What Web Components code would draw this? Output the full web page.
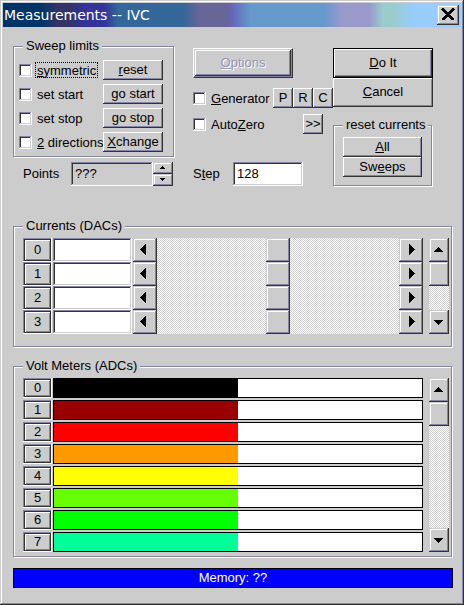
<!DOCTYPE html>
<html lang="en">
<head>
<meta charset="utf-8">
<title>Measurements -- IVC</title>
<style>
  html, body { height: 100%; }
  body {
    margin: 0;
    font: 13px/14px "Liberation Sans", Arial, sans-serif;
    color: #000;
    --face: #ccc;
    --light: #fff;
    --shade: #8484a4;
    --dark: #333;
  }
  .top {
    display: grid;
    grid-template-columns: 162px 140px 100px;
    grid-template-rows: 118px 24px;
    column-gap: 18px;
    row-gap: 5px;
    margin-bottom: 33px;
  }
  .top > .side { grid-column: 3; grid-row: 1 / 3; margin-left: -18px; width: 100px; }
  .side, .middle { display: flex; flex-direction: column; padding-top: 9px; }
  .side group-box { margin-top: 11px; --pad: 5px 9px 8px; }
  .big { --height: 30px; }
  .middle .big { width: 100px; margin-bottom: 10px; }
  .row { display: flex; align-items: center; height: 20px; margin-bottom: 6px; }
  .row .end { margin-left: auto; }
  .row push-button { width: 20px; flex: none; }
  .row .more { margin-right: 10px; }
  .limits { --pad: 7px 11px 4px 5px; }
  .pairs { display: grid; grid-template-columns: 84px 60px; row-gap: 4px; }
  .channels { display: flex; gap: 6px; }
  .list { flex: 1; min-width: 0; display: flex; flex-direction: column; }
  .meters .list { gap: 2px; }
  .currents { --pad: 5px 2px 12px 9px; margin-bottom: 12px; }
  .meters { --pad: 5px 2px 4px 9px; margin-bottom: 11px; }
</style>
</head>
<body>
<dialog-window>
  <span slot="title">Measurements -- IVC</span>

  <div class="top">
    <group-box class="limits">
      <span slot="legend">Sweep limits</span>
      <div class="pairs">
        <check-option focused><u>s</u>ymmetric</check-option>
        <push-button><u>r</u>eset</push-button>
        <check-option>set start</check-option>
        <push-button>go start</push-button>
        <check-option>set stop</check-option>
        <push-button>go stop</push-button>
        <check-option><u>2</u> directions</check-option>
        <push-button><u>X</u>change</push-button>
      </div>
    </group-box>

    <div class="middle">
      <push-button class="big" kind="framed" disabled><u>O</u>ptions</push-button>
      <div class="row">
        <check-option><u>G</u>enerator</check-option>
        <push-button class="end">P</push-button>
        <push-button>R</push-button>
        <push-button>C</push-button>
      </div>
      <div class="row">
        <check-option>Auto<u>Z</u>ero</check-option>
        <push-button class="end more">&gt;&gt;</push-button>
      </div>
    </div>

    <div class="side">
      <push-button class="big" kind="default"><u>D</u>o It</push-button>
      <push-button class="big"><u>C</u>ancel</push-button>
      <group-box>
        <span slot="legend">reset currents</span>
        <push-button><u>A</u>ll</push-button>
        <push-button>Sw<u>e</u>eps</push-button>
      </group-box>
    </div>

    <number-field value="???" spinner readonly style="--indent: 10px; --label: 48px; --field: 82px">Points</number-field>
    <number-field value="128" style="--label: 40px; --field: 70px">S<u>t</u>ep</number-field>
  </div>

  <group-box class="currents">
    <span slot="legend">Currents (DACs)</span>
    <div class="channels">
      <div class="list">
        <current-row channel="0"></current-row>
        <current-row channel="1"></current-row>
        <current-row channel="2"></current-row>
        <current-row channel="3"></current-row>
      </div>
      <scroll-bar vertical value="0" label="Scroll currents"></scroll-bar>
    </div>
  </group-box>

  <group-box class="meters">
    <span slot="legend">Volt Meters (ADCs)</span>
    <div class="channels">
      <div class="list">
        <meter-row channel="0" color="#000000"></meter-row>
        <meter-row channel="1" color="#990000"></meter-row>
        <meter-row channel="2" color="#ff0000"></meter-row>
        <meter-row channel="3" color="#ff9900"></meter-row>
        <meter-row channel="4" color="#ffff00"></meter-row>
        <meter-row channel="5" color="#66ff00"></meter-row>
        <meter-row channel="6" color="#00ff00"></meter-row>
        <meter-row channel="7" color="#00ff99"></meter-row>
      </div>
      <scroll-bar vertical value="0" label="Scroll volt meters"></scroll-bar>
    </div>
  </group-box>

  <status-bar>Memory: ??</status-bar>
</dialog-window>

<script>
const base = `
  * { box-sizing: border-box; }
  :host { display: block; box-sizing: border-box; }
  button, input { font: inherit; color: inherit; margin: 0; padding: 0; border: 0; border-radius: 0; outline: 0; }
  svg { display: block; shape-rendering: crispEdges; }
  .raised {
    background: var(--face);
    box-shadow: inset -1px -1px var(--dark), inset 1px 1px var(--face), inset -2px -2px var(--shade), inset 2px 2px var(--light);
  }
  .sunken {
    background: #fff;
    box-shadow: inset -1px -1px var(--light), inset 1px 1px var(--shade), inset -2px -2px var(--face), inset 2px 2px var(--dark);
  }
`

const arrows = {
  left: '<svg width="24" height="24"><path d="M13 6v11h-1v-1h-1v-1h-1v-1h-1v-1h-1v-1h-1v-1h1v-1h1v-1h1v-1h1v-1h1v-1z"/></svg>',
  right: '<svg width="24" height="24"><path d="M10 6v11h1v-1h1v-1h1v-1h1v-1h1v-1h1v-1h-1v-1h-1v-1h-1v-1h-1v-1h-1v-1z"/></svg>',
  up: '<svg width="20" height="24"><path d="M9 9h1v1h1v1h1v1h1v1h1v1h-9v-1h1v-1h1v-1h1v-1h1z"/></svg>',
  down: '<svg width="20" height="24"><path d="M5 10h9v1h-1v1h-1v1h-1v1h-1v1h-1v-1h-1v-1h-1v-1h-1v-1h-1z"/></svg>'
}

class BaseElement extends HTMLElement {
  constructor () {
    super()
    this.attachShadow({mode: 'open'})
  }

  connectedCallback () {
    this.shadowRoot.innerHTML = `<style>${base}</style>${this.render()}`
  }
}

class DialogWindow extends BaseElement {
  render () {
    return `
      <style>
        :host {
          min-height: 100%; padding: 3px 3px 2px; background: var(--face);
          box-shadow: inset -1px -1px var(--dark), inset 1px 1px var(--face), inset -2px -2px var(--shade), inset 2px 2px var(--light);
        }
        header {
          display: flex; align-items: center; justify-content: space-between;
          height: 24px; padding: 0 2px 0 1px; color: #fff;
          background: linear-gradient(90deg, #036 8%, #336 12% 14%, #339 18% 22%, #369 25% 39%,
            #669 43% 49%, #66b 50%, #69c 54% 70%, #99c 74% 80%, #9cc 83% 85%, #9cf 90%);
        }
        h1 { margin: 0; font: 500 14px/24px "DejaVu Sans", sans-serif; }
        button { width: 22px; height: 20px; }
        path { fill: none; stroke: #000; stroke-width: 2; }
        main { padding: 12px 8px 15px 10px; }
      </style>
      <header>
        <h1><slot name="title"></slot></h1>
        <button class="raised" aria-label="Close">
          <svg width="22" height="20"><path d="M5 4l11 11M6 4l11 11M5 15l11 -11M6 15l11 -11"/></svg>
        </button>
      </header>
      <main><slot></slot></main>
    `
  }
}

class GroupBox extends BaseElement {
  render () {
    return `
      <style>
        fieldset {
          margin: 0; min-width: 0; padding: var(--pad);
          border: 1px solid var(--shade);
          box-shadow: 1px 1px var(--light), inset 1px 1px var(--light);
        }
        :host { padding-right: 1px; }
        legend { margin-left: 0; padding: 0 3px; background: var(--face); white-space: nowrap; }
        :host(.limits) legend { margin-left: 4px; }
      </style>
      <fieldset>
        <legend><slot name="legend"></slot></legend>
        <slot></slot>
      </fieldset>
    `
  }
}

class PushButton extends BaseElement {
  render () {
    return `
      <style>
        :host { height: var(--height, 20px); }
        button {
          display: block; width: 100%; height: 100%; white-space: nowrap; background: var(--face);
          box-shadow: inset -1px -1px var(--dark), inset 1px 1px var(--light), inset -2px -2px var(--shade);
        }
        :host([kind=default]) button {
          border: 1px solid #000;
          box-shadow: inset 1px 1px var(--light), inset -1px -1px var(--dark), inset -2px -2px var(--shade);
        }
        :host([kind=framed]) button {
          border: 1px solid; border-color: var(--light) var(--dark) var(--dark) var(--light);
          box-shadow: inset -1px -1px var(--shade), inset 1px 1px var(--face), inset -2px -2px var(--dark),
            inset 2px 2px var(--light), inset -3px -3px var(--shade);
        }
        button:disabled { color: #9494b4; text-shadow: 1px 1px #fff; }
      </style>
      <button ${this.hasAttribute('disabled') ? 'disabled' : ''}><slot></slot></button>
    `
  }
}

class CheckOption extends BaseElement {
  render () {
    return `
      <style>
        :host { height: 20px; overflow: hidden; }
        label { display: flex; align-items: center; height: 20px; white-space: nowrap; }
        input { appearance: none; flex: none; width: 13px; height: 13px; margin-right: 3px; }
        input:checked { background: #000; }
        span { padding: 0 1px; height: 16px; line-height: 16px; border: 1px solid transparent; }
        :host([focused]) span { border: 1px dotted #000; }
      </style>
      <label><input type="checkbox" class="sunken"><span><slot></slot></span></label>
    `
  }
}

class NumberField extends BaseElement {
  render () {
    const readonly = this.hasAttribute('readonly')
    const spinner = `
      <div class="spin">
        <button class="raised" aria-label="Increase"><svg width="20" height="12"><path d="M9 4h1v1h1v1h1v1h-5v-1h1v-1h1z"/></svg></button>
        <button class="raised" aria-label="Decrease"><svg width="20" height="12"><path d="M7 4h5v1h-1v1h-1v1h-1v-1h-1v-1h-1z"/></svg></button>
      </div>
    `
    return `
      <style>
        :host { display: flex; align-items: center; height: 24px; padding-left: var(--indent, 0); }
        label { width: var(--label); flex: none; }
        input { width: var(--field); height: 24px; padding: 0 4px 2px; }
        input:read-only { background: var(--face); }
        .spin { width: 20px; height: 24px; }
        .spin button { display: block; width: 20px; height: 12px; }
      </style>
      <label for="field"><slot></slot></label>
      <input id="field" class="sunken" value="${this.getAttribute('value')}" ${readonly ? 'readonly' : ''}>
      ${this.hasAttribute('spinner') ? spinner : ''}
    `
  }
}

class ChannelButton extends BaseElement {
  render () {
    return `
      <style>
        :host {
          flex: none; width: 29px; margin-right: 1px; padding: 1px;
          box-shadow: inset -1px -1px var(--light), inset 1px 1px var(--shade);
        }
        button {
          display: block; width: 100%; height: 100%; background: var(--face);
          border: 1px solid var(--dark);
          box-shadow: inset 1px 1px var(--light), inset -1px -1px var(--shade);
        }
      </style>
      <button><slot></slot></button>
    `
  }
}

class ScrollBar extends BaseElement {
  render () {
    const vertical = this.hasAttribute('vertical')
    return `
      <style>
        :host { display: flex; flex: 1; min-width: 0; }
        :host([vertical]) { flex: none; flex-direction: column; width: 20px; }
        button { flex: none; height: 24px; }
        input {
          appearance: none; flex: 1; min-width: 0; min-height: 0; height: 24px;
          background: repeating-conic-gradient(#ccc 0 25%, #fff 0 50%) 0 0 / 2px 2px;
        }
        :host([vertical]) input { writing-mode: vertical-lr; width: 20px; height: auto; }
        input::-webkit-slider-thumb {
          appearance: none; box-sizing: border-box; width: 24px; height: 24px; border-radius: 0;
          background: var(--face);
          box-shadow: inset -1px -1px var(--dark), inset 1px 1px var(--face), inset -2px -2px var(--shade), inset 2px 2px var(--light);
        }
        :host([vertical]) input::-webkit-slider-thumb { width: 20px; }
      </style>
      <button class="raised" aria-label="Back">${vertical ? arrows.up : arrows.left}</button>
      <input type="range" aria-label="${this.getAttribute('label')}" value="${this.getAttribute('value')}">
      <button class="raised" aria-label="Forward">${vertical ? arrows.down : arrows.right}</button>
    `
  }
}

class CurrentRow extends BaseElement {
  render () {
    const channel = this.getAttribute('channel')
    return `
      <style>
        :host { display: flex; height: 24px; }
        .value { flex: none; width: 79px; height: 24px; margin-right: 1px; padding: 0 4px; }
      </style>
      <channel-button>${channel}</channel-button>
      <input class="value sunken" aria-label="Current ${channel}">
      <scroll-bar value="50" label="Adjust current ${channel}"></scroll-bar>
    `
  }
}

class MeterRow extends BaseElement {
  render () {
    return `
      <style>
        :host { display: flex; height: 20px; }
        .bar { flex: 1; border: 1px solid #000; background: #fff; }
        .fill { width: 50%; height: 100%; background: ${this.getAttribute('color')}; }
      </style>
      <channel-button>${this.getAttribute('channel')}</channel-button>
      <div class="bar"><div class="fill"></div></div>
    `
  }
}

class StatusBar extends BaseElement {
  render () {
    return `
      <style>
        :host { height: 20px; border: 1px solid #000; background: #00f; color: #fff; line-height: 18px; text-align: center; }
      </style>
      <slot></slot>
    `
  }
}

window.customElements.define('dialog-window', DialogWindow)
window.customElements.define('group-box', GroupBox)
window.customElements.define('push-button', PushButton)
window.customElements.define('check-option', CheckOption)
window.customElements.define('number-field', NumberField)
window.customElements.define('channel-button', ChannelButton)
window.customElements.define('scroll-bar', ScrollBar)
window.customElements.define('current-row', CurrentRow)
window.customElements.define('meter-row', MeterRow)
window.customElements.define('status-bar', StatusBar)
</script>
</body>
</html>
